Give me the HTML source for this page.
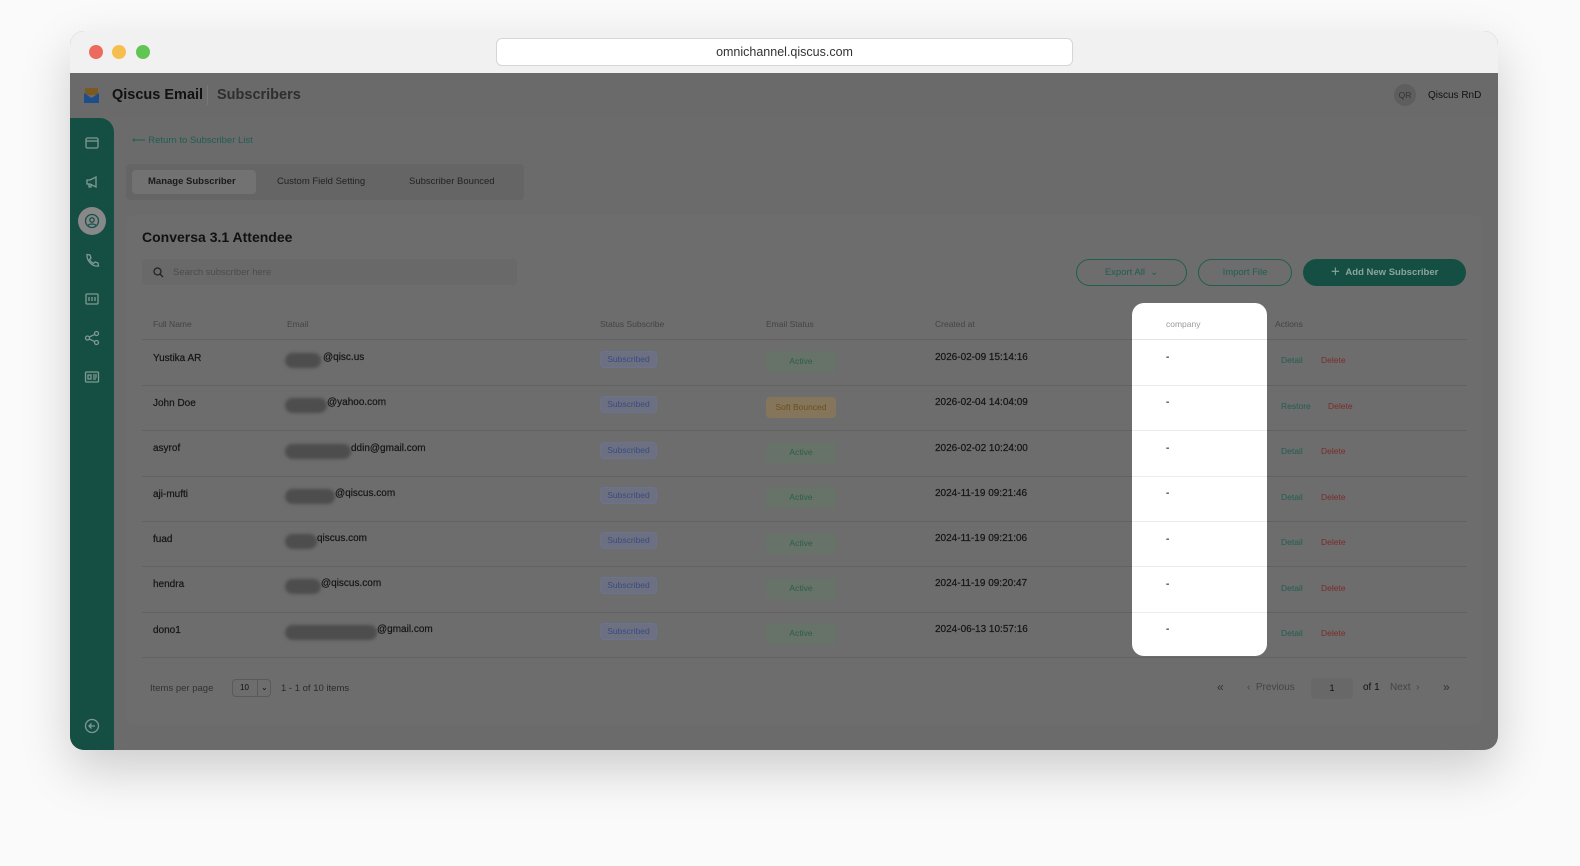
<!DOCTYPE html>
<html><head><meta charset="utf-8"><style>
*{margin:0;padding:0;box-sizing:border-box}
body{width:1580px;height:866px;background:#fafafa;font-family:"Liberation Sans",Arial,sans-serif;position:relative;overflow:hidden}
.win{position:absolute;left:70px;top:31px;width:1428px;height:719px;border-radius:14px;overflow:hidden;box-shadow:0 20px 50px rgba(0,0,0,.18);background:#6b6b6b}
.tb{position:absolute;left:0;top:0;width:100%;height:42px;background:#f1f1f1}
.dot{position:absolute;top:14px;width:14px;height:14px;border-radius:50%}
.url{position:absolute;left:426px;top:7px;width:577px;height:28px;background:#fff;border:1px solid #d6d6d6;border-radius:6px;text-align:center;font-size:12.5px;line-height:26px;color:#333}
.hdr{position:absolute;left:0;top:42px;width:100%;height:45px;background:#6a6a6a}
.side{position:absolute;left:0;top:87px;width:44px;height:632px;background:#154f43;border-top-right-radius:14px}
.a{position:absolute;white-space:nowrap}
.t{font-size:10px;color:#151515;-webkit-text-stroke:0.2px #151515}
.h{font-size:8.5px;color:#444}
.pill{position:absolute;font-size:8.5px;border-radius:4px;text-align:center}
.sub{border:1px solid #6a7390;color:#3a4b82;background:#6c7080;width:57px;height:17px;line-height:15px}
.act{background:#677369;color:#2b5f45;width:70px;height:21px;line-height:21px}
.sb{background:#85755a;color:#6a5020;width:70px;height:21px;line-height:21px}
.blur{position:absolute;height:15px;background:#4d4d4d;border-radius:8px;filter:blur(1.5px)}
.line{position:absolute;left:72px;width:1325px;height:1px;background:#626262}
.ic{position:absolute;left:14px;width:16px;height:16px}
</style></head><body>
<div class="win">
<div class="tb">
<div class="dot" style="left:19px;background:#ee6a5f"></div>
<div class="dot" style="left:42px;background:#f5be4f"></div>
<div class="dot" style="left:66px;background:#61c554"></div>
<div class="url">omnichannel.qiscus.com</div>
</div>
<div class="hdr">
<svg class="a" style="left:14px;top:14px" width="15" height="17" viewBox="0 0 15 17"><rect x="1" y="1" width="13" height="7" fill="#7a5a20"/><path d="M0 6 L7.5 11 L15 6 V16 H0Z" fill="#1e4d8c"/></svg>
<div class="a" style="left:42px;top:14px;font-size:14.5px;font-weight:bold;color:#111">Qiscus Email</div>
<div class="a" style="left:137px;top:12px;width:1px;height:20px;background:#777"></div>
<div class="a" style="left:147px;top:14px;font-size:14.5px;font-weight:bold;color:#2e2e2e">Subscribers</div>
<div class="a" style="left:1324px;top:11px;width:22px;height:22px;border-radius:50%;background:#5e5e5e;font-size:8.5px;color:#333;text-align:center;line-height:22px">QR</div>
<div class="a" style="left:1358px;top:17px;font-size:10px;color:#111">Qiscus RnD</div>
</div>
<div class="side">
<svg class="ic" style="top:17px" viewBox="0 0 16 16" fill="none" stroke="#7f9a93" stroke-width="1.3"><rect x="2" y="3" width="12" height="10" rx="1.5"/><path d="M2 6h12"/></svg>
<svg class="ic" style="top:56px" viewBox="0 0 16 16" fill="none" stroke="#7f9a93" stroke-width="1.3"><path d="M3 6h3l6-3v10l-6-3H3zM5 10v3h2v-3"/></svg>
<div class="a" style="left:8px;top:89px;width:28px;height:28px;border-radius:50%;background:#888"></div>
<svg class="ic" style="top:95px;left:14px" viewBox="0 0 16 16" fill="none" stroke="#17514a" stroke-width="1.3"><circle cx="8" cy="8" r="6.5"/><circle cx="8" cy="7" r="2.2"/><path d="M4 12.5c1.5-2 6.5-2 8 0"/></svg>
<svg class="ic" style="top:134px" viewBox="0 0 16 16" fill="none" stroke="#7f9a93" stroke-width="1.3"><path d="M3 2.5l3 .5 1 3-1.5 1.5c1 2 2 3 4 4L11 10l3 1 .5 3c-6 1-12-5-11.5-11.5z"/></svg>
<svg class="ic" style="top:173px" viewBox="0 0 16 16" fill="none" stroke="#7f9a93" stroke-width="1.3"><rect x="2" y="3" width="12" height="10" rx="1"/><path d="M5 6v4M8 6v4M11 6v4"/></svg>
<svg class="ic" style="top:212px" viewBox="0 0 16 16" fill="none" stroke="#7f9a93" stroke-width="1.3"><circle cx="3.5" cy="8" r="2"/><circle cx="12.5" cy="3.5" r="2"/><circle cx="12.5" cy="12.5" r="2"/><path d="M5.3 7l5.4-2.6M5.3 9l5.4 2.6"/></svg>
<svg class="ic" style="top:251px" viewBox="0 0 16 16" fill="none" stroke="#7f9a93" stroke-width="1.3"><rect x="1.5" y="3" width="13" height="10" rx="1"/><path d="M4 6h3v4H4zM9 6h4M9 8h4M9 10h3"/></svg>
<svg class="ic" style="top:600px" viewBox="0 0 16 16" fill="none" stroke="#7f9a93" stroke-width="1.3"><circle cx="8" cy="8" r="6.5"/><path d="M11 8H5M7.5 5.5L5 8l2.5 2.5"/></svg>
</div>
<div class="a" style="left:62px;top:104px;font-size:9.5px;color:#1f5e50">⟵ Return to Subscriber List</div>
<div class="a" style="left:56px;top:133px;width:398px;height:36px;background:#656565;border-radius:4px"></div>
<div class="a" style="left:62px;top:139px;width:124px;height:24px;background:#727272;border-radius:4px"></div>
<div class="a" style="left:78px;top:145px;font-size:9.5px;color:#1a1a1a;font-weight:bold">Manage Subscriber</div>
<div class="a" style="left:207px;top:145px;font-size:9.5px;color:#222">Custom Field Setting</div>
<div class="a" style="left:339px;top:145px;font-size:9.5px;color:#222">Subscriber Bounced</div>
<div class="a" style="left:56px;top:184px;width:1356px;height:510px;background:#6d6d6d;border-radius:6px"></div>
<div class="a" style="left:72px;top:198px;font-size:14px;font-weight:bold;color:#111">Conversa 3.1 Attendee</div>
<div class="a" style="left:72px;top:228px;width:375px;height:26px;background:#696969;border-radius:4px"></div>
<svg class="a" style="left:83px;top:236px" width="11" height="11" viewBox="0 0 11 11" fill="none" stroke="#222" stroke-width="1.3"><circle cx="4.5" cy="4.5" r="3.5"/><path d="M7 7l3 3"/></svg>
<div class="a" style="left:103px;top:236px;font-size:9.5px;color:#4c4c4c">Search subscriber here</div>
<div class="a" style="left:1006px;top:228px;width:111px;height:27px;border:1px solid #1f5e50;border-radius:14px;font-size:9.5px;color:#1f5e50;text-align:center;line-height:25px">Export All &nbsp;⌄</div>
<div class="a" style="left:1128px;top:228px;width:94px;height:27px;border:1px solid #1f5e50;border-radius:14px;font-size:9.5px;color:#1f5e50;text-align:center;line-height:25px">Import File</div>
<div class="a" style="left:1233px;top:228px;width:163px;height:27px;background:#154f43;border-radius:14px;font-size:9.5px;color:#8aa59e;text-align:center;line-height:27px;font-weight:bold">＋ &nbsp;Add New Subscriber</div>
<div class="a h" style="left:83px;top:288px">Full Name</div>
<div class="a h" style="left:217px;top:288px">Email</div>
<div class="a h" style="left:530px;top:288px">Status Subscribe</div>
<div class="a h" style="left:696px;top:288px">Email Status</div>
<div class="a h" style="left:865px;top:288px">Created at</div>
<div class="a h" style="left:1205px;top:288px">Actions</div>
<div class="line" style="top:308px"></div>
<div class="line" style="top:354px"></div><div class="line" style="top:399px"></div><div class="line" style="top:445px"></div><div class="line" style="top:490px"></div><div class="line" style="top:535px"></div><div class="line" style="top:581px"></div><div class="line" style="top:626px"></div>

<div class="a t" style="left:83px;top:322px">Yustika AR</div><div class="blur" style="left:215px;top:322px;width:36px"></div><div class="a t" style="left:253px;top:321px">@qisc.us</div><div class="pill sub" style="left:530px;top:320px">Subscribed</div><div class="pill act" style="left:696px;top:320px">Active</div><div class="a t" style="left:865px;top:321px">2026-02-09 15:14:16</div>
<div class="a t" style="left:83px;top:367px">John Doe</div><div class="blur" style="left:215px;top:367px;width:42px"></div><div class="a t" style="left:257px;top:366px">@yahoo.com</div><div class="pill sub" style="left:530px;top:365px">Subscribed</div><div class="pill sb" style="left:696px;top:366px">Soft Bounced</div><div class="a t" style="left:865px;top:366px">2026-02-04 14:04:09</div>
<div class="a t" style="left:83px;top:412px">asyrof</div><div class="blur" style="left:215px;top:413px;width:66px"></div><div class="a t" style="left:281px;top:412px">ddin@gmail.com</div><div class="pill sub" style="left:530px;top:411px">Subscribed</div><div class="pill act" style="left:696px;top:411px">Active</div><div class="a t" style="left:865px;top:412px">2026-02-02 10:24:00</div>
<div class="a t" style="left:83px;top:458px">aji-mufti</div><div class="blur" style="left:215px;top:458px;width:50px"></div><div class="a t" style="left:265px;top:457px">@qiscus.com</div><div class="pill sub" style="left:530px;top:456px">Subscribed</div><div class="pill act" style="left:696px;top:456px">Active</div><div class="a t" style="left:865px;top:457px">2024-11-19 09:21:46</div>
<div class="a t" style="left:83px;top:503px">fuad</div><div class="blur" style="left:215px;top:503px;width:32px"></div><div class="a t" style="left:247px;top:502px">qiscus.com</div><div class="pill sub" style="left:530px;top:501px">Subscribed</div><div class="pill act" style="left:696px;top:502px">Active</div><div class="a t" style="left:865px;top:502px">2024-11-19 09:21:06</div>
<div class="a t" style="left:83px;top:548px">hendra</div><div class="blur" style="left:215px;top:548px;width:36px"></div><div class="a t" style="left:251px;top:547px">@qiscus.com</div><div class="pill sub" style="left:530px;top:546px">Subscribed</div><div class="pill act" style="left:696px;top:547px">Active</div><div class="a t" style="left:865px;top:547px">2024-11-19 09:20:47</div>
<div class="a t" style="left:83px;top:594px">dono1</div><div class="blur" style="left:215px;top:594px;width:92px"></div><div class="a t" style="left:307px;top:593px">@gmail.com</div><div class="pill sub" style="left:530px;top:592px">Subscribed</div><div class="pill act" style="left:696px;top:592px">Active</div><div class="a t" style="left:865px;top:593px">2024-06-13 10:57:16</div>

<div class="a" style="left:1211px;top:324px;font-size:8.5px;color:#1f5e50">Detail</div><div class="a" style="left:1251px;top:324px;font-size:8.5px;color:#7a2b2b">Delete</div>
<div class="a" style="left:1211px;top:370px;font-size:8.5px;color:#1f5e50">Restore</div><div class="a" style="left:1258px;top:370px;font-size:8.5px;color:#7a2b2b">Delete</div>
<div class="a" style="left:1211px;top:415px;font-size:8.5px;color:#1f5e50">Detail</div><div class="a" style="left:1251px;top:415px;font-size:8.5px;color:#7a2b2b">Delete</div>
<div class="a" style="left:1211px;top:461px;font-size:8.5px;color:#1f5e50">Detail</div><div class="a" style="left:1251px;top:461px;font-size:8.5px;color:#7a2b2b">Delete</div>
<div class="a" style="left:1211px;top:506px;font-size:8.5px;color:#1f5e50">Detail</div><div class="a" style="left:1251px;top:506px;font-size:8.5px;color:#7a2b2b">Delete</div>
<div class="a" style="left:1211px;top:552px;font-size:8.5px;color:#1f5e50">Detail</div><div class="a" style="left:1251px;top:552px;font-size:8.5px;color:#7a2b2b">Delete</div>
<div class="a" style="left:1211px;top:597px;font-size:8.5px;color:#1f5e50">Detail</div><div class="a" style="left:1251px;top:597px;font-size:8.5px;color:#7a2b2b">Delete</div>

<div class="a" style="left:1062px;top:272px;width:135px;height:353px;background:#fff;border-radius:12px;overflow:hidden">
<div class="a h" style="left:34px;top:16px;color:#999">company</div>
<div class="a" style="left:0;top:36px;width:135px;height:1px;background:#e4e4e4"></div>
<div class="a" style="left:0;top:82px;width:135px;height:1px;background:#ececec"></div>
<div class="a" style="left:0;top:127px;width:135px;height:1px;background:#ececec"></div>
<div class="a" style="left:0;top:173px;width:135px;height:1px;background:#ececec"></div>
<div class="a" style="left:0;top:218px;width:135px;height:1px;background:#ececec"></div>
<div class="a" style="left:0;top:263px;width:135px;height:1px;background:#ececec"></div>
<div class="a" style="left:0;top:309px;width:135px;height:1px;background:#ececec"></div>
<div class="a t" style="left:34px;top:49px">-</div><div class="a t" style="left:34px;top:94px">-</div><div class="a t" style="left:34px;top:140px">-</div><div class="a t" style="left:34px;top:185px">-</div><div class="a t" style="left:34px;top:231px">-</div><div class="a t" style="left:34px;top:276px">-</div><div class="a t" style="left:34px;top:321px">-</div>
</div>

<div class="a" style="left:80px;top:652px;font-size:9.5px;color:#333">Items per page</div>
<div class="a" style="left:162px;top:648px;width:39px;height:18px;border:1px solid #5a5a5a;border-radius:4px;font-size:8px;color:#111;line-height:16px;padding-left:7px">10<span style="position:absolute;left:24px;top:0;height:16px;border-left:1px solid #5a5a5a;padding-left:3px">⌄</span></div>
<div class="a" style="left:211px;top:652px;font-size:9.5px;color:#2a2a2a">1 - 1 of 10 items</div>
<div class="a" style="left:1147px;top:649px;font-size:12px;color:#333">«</div>
<div class="a" style="left:1177px;top:651px;font-size:10px;color:#444">‹ &nbsp;Previous</div>
<div class="a" style="left:1241px;top:647px;width:42px;height:21px;background:#686868;border-radius:4px;font-size:9px;color:#111;text-align:center;line-height:21px">1</div>
<div class="a" style="left:1293px;top:651px;font-size:10px;color:#111">of 1</div>
<div class="a" style="left:1320px;top:651px;font-size:10px;color:#444">Next &nbsp;›</div>
<div class="a" style="left:1373px;top:649px;font-size:12px;color:#333">»</div>
</div>
</body></html>
